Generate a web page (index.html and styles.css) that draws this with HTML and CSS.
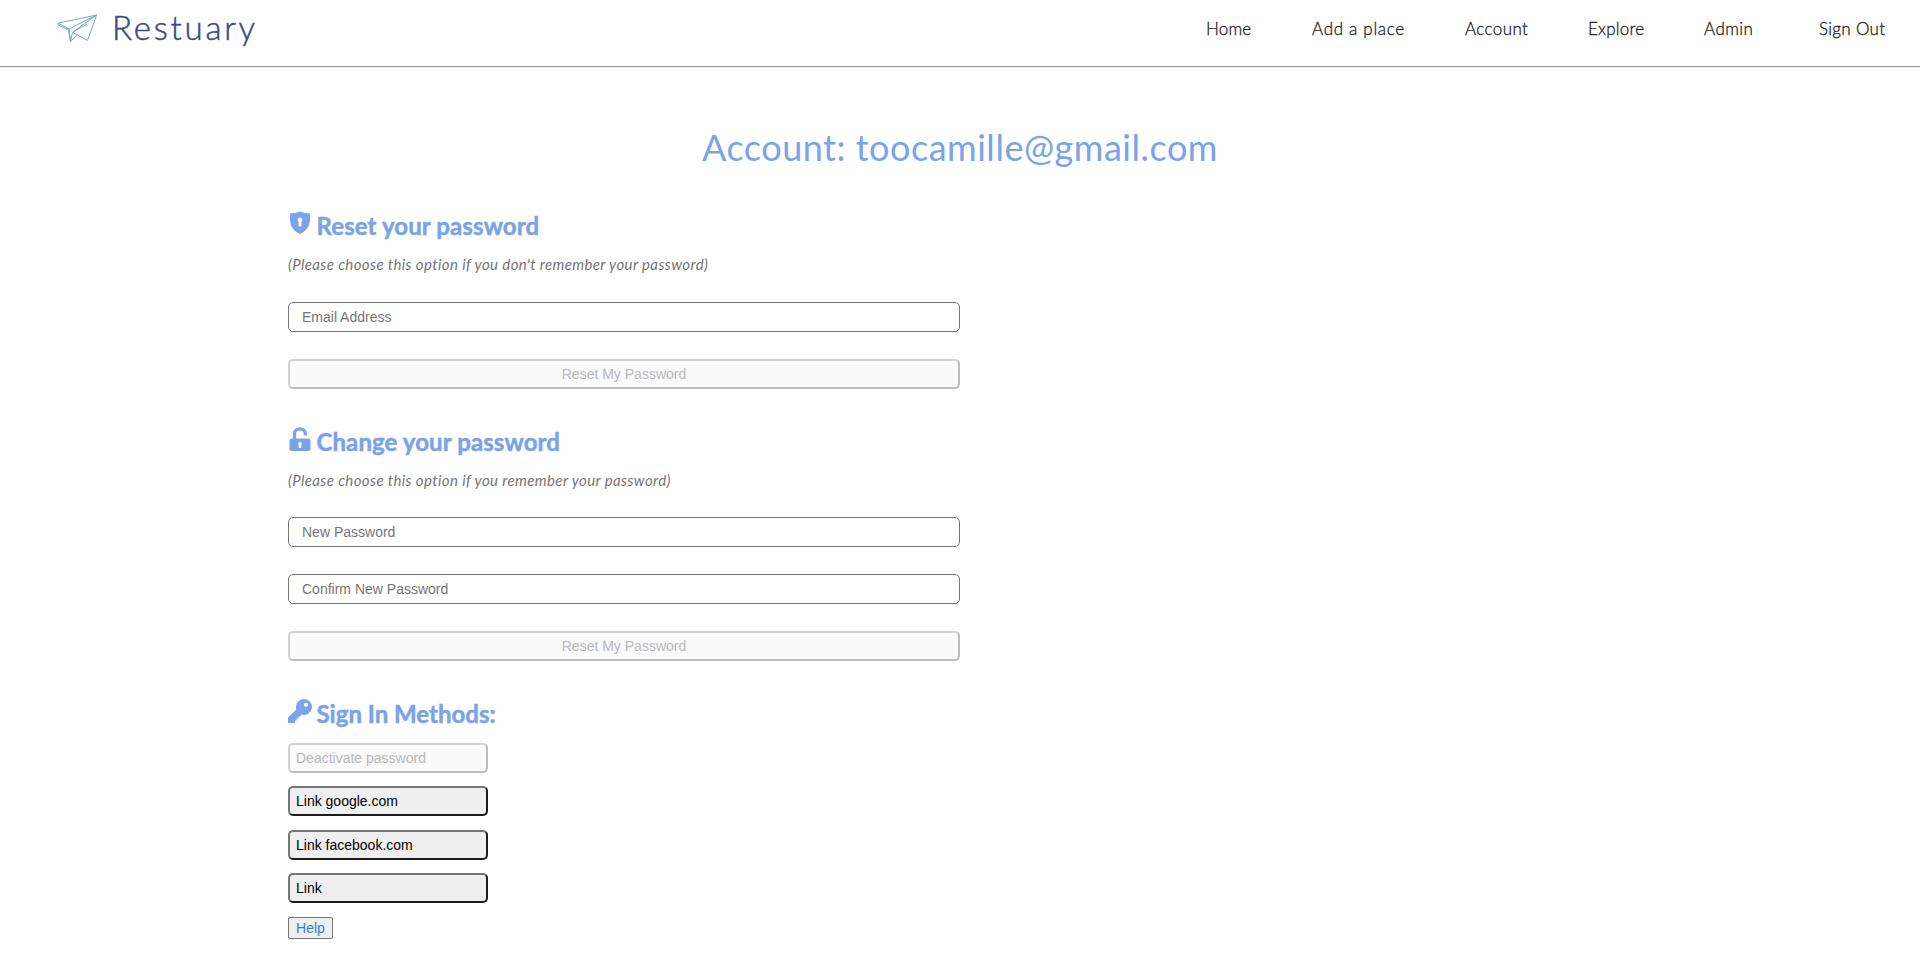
FILE: index.html
```
<!DOCTYPE html>
<html lang="en">
<head>
<meta charset="utf-8">
<title>Restuary</title>
<link rel="stylesheet" href="styles.css">
</head>
<body>
<header class="header">
  <a class="brand">
    <svg class="plane" width="42" height="30" viewBox="0 0 42 30" fill="none" stroke="#74a9c8" stroke-width="1" stroke-linejoin="round"><path d="M1 9.200 39.500 1 12 15Z"/><path d="M1 9.200 1.500 11 11.500 16 13.500 27.500 15.500 18.500 39.500 1 30.500 26.500 16 18.500"/><path d="M13.500 27.500 20.500 21"/><path d="M12 15 13.500 27.500M15.500 18.500 30 10"/></svg>
    <span class="wordmark">Restuary</span>
  </a>
  <nav class="nav">
    <a class="home">Home</a><a class="add">Add a place</a><a class="account">Account</a><a class="explore">Explore</a><a class="admin">Admin</a><a class="signout">Sign Out</a>
  </nav>
</header>
<main class="main">
  <h1 class="title">Account: toocamille@gmail.com</h1>
  <section class="section">
    <h2 class="heading heading-reset"><svg class="icon" width="24" height="24" viewBox="0 0 24 24"><path fill="#7aa3e8" fill-rule="evenodd" d="M12 0.500C9 1.800 5.500 2.500 2 2.500V9C2 15.500 6.500 20.500 12 23 17.500 20.500 22 15.500 22 9V2.500C18.500 2.500 15 1.800 12 0.500ZM12 6.500A2.300 2.300 0 0 0 10.700 10.700V15.500H13.300V10.700A2.300 2.300 0 0 0 12 6.500Z"/></svg><span>Reset your password</span></h2>
    <p class="note">(Please choose this option if you don't remember your password)</p>
    <input class="field" type="text" placeholder="Email Address">
    <button class="button" disabled>Reset My Password</button>
  </section>
  <section class="section">
    <h2 class="heading heading-change"><svg class="icon" width="24" height="24" viewBox="0 0 24 24"><path fill="none" stroke="#7aa3e8" stroke-width="3.300" d="M6.500 13V6.500C6.500 .300 17.300 .300 17.300 6.500V8.500"/><path fill="#7aa3e8" fill-rule="evenodd" d="M3.500 11.500H20.500Q22.500 11.500 22.500 13.500V22Q22.500 24 20.500 24H3.500Q1.500 24 1.500 22V13.500Q1.500 11.500 3.500 11.500ZM12 15A1.700 1.700 0 0 0 10.800 18V21H13.200V18A1.700 1.700 0 0 0 12 15Z"/></svg><span>Change your password</span></h2>
    <p class="note note-change">(Please choose this option if you remember your password)</p>
    <input class="field" type="password" placeholder="New Password">
    <input class="field" type="password" placeholder="Confirm New Password">
    <button class="button" disabled>Reset My Password</button>
  </section>
  <section class="section">
    <h2 class="heading"><svg class="icon" width="24" height="24" viewBox="0 0 24 24"><path fill="#7aa3e8" fill-rule="evenodd" d="M16 0A8 8 0 1 1 13.500 15.600L12 17.500H10.500V19.500H8.500V21.500H7V24H0V18.500L8.400 10.500A8 8 0 0 1 16 0ZM18 3.800A2 2 0 1 0 18 7.800 2 2 0 0 0 18 3.800Z"/></svg><span>Sign In Methods:</span></h2>
    <div class="methods">
      <button class="method" disabled>Deactivate password</button>
      <button class="method">Link google.com</button>
      <button class="method">Link facebook.com</button>
      <button class="method">Link</button>
      <button class="help">Help</button>
    </div>
  </section>
</main>
</body>
</html>
```
FILE: styles.css
```
* { box-sizing: border-box; }
body { margin: 0; background: #fff; font-family: Lato, sans-serif; }
.header { display: flex; justify-content: space-between; height: 68px; padding: 0 30px 0 57px; border-bottom: 1px solid #eee; box-shadow: inset 0 -1px 0 #969696; }
.brand { display: flex; padding-top: 14px; gap: 13px; }
.wordmark { margin-top: -7px; font-weight: 300; font-size: 33px; line-height: 40px; letter-spacing: 2.75px; color: #3c4a86; -webkit-text-stroke: 0.5px #3c4a86; }
.nav { display: flex; padding-top: 18px; font-size: 17px; line-height: 22px; font-weight: 300; letter-spacing: .2px; color: #222; -webkit-text-stroke: 0.3px #222; }
.nav a { white-space: nowrap; }
.home { width: 106px; }
.add { width: 153px; letter-spacing: .7px; }
.account { width: 123px; letter-spacing: .4px; }
.explore { width: 116px; letter-spacing: .2px; }
.admin { width: 115px; letter-spacing: .45px; }
.signout { width: 71px; letter-spacing: .3px; }
.main { width: 1344px; margin: 0 auto; }
.title { margin: 57px 0 0; text-align: center; font-weight: 400; font-size: 36px; line-height: 44px; letter-spacing: .52px; color: #7aa3e8; }
.section { display: flex; flex-direction: column; align-items: flex-start; }
.heading { display: flex; align-items: flex-start; gap: 4.5px; height: 32px; margin: 42px 0 0; font-size: 24px; line-height: 30px; font-weight: 700; color: #7aa3e8; -webkit-text-stroke: 0.5px #7aa3e8; }
.heading-reset, .heading-change { letter-spacing: .1px; }
.section + .section .heading { margin-top: 38px; }
.note { margin: 11px 0 28px; font-size: 15px; line-height: 20px; letter-spacing: .38px; font-style: italic; color: #757575; }
.note-change { margin-bottom: 27px; }
.field, .button { width: 672px; height: 30px; margin: 0 0 27px; border-radius: 5px; font-family: "Liberation Sans", Arial, sans-serif; font-size: 14px; }
.field { padding: 0 14px 0 13px; border: 1px solid #767676; }
.field::placeholder { color: #757575; }
.button { margin-bottom: 0; }
.methods { display: flex; flex-direction: column; align-items: flex-start; gap: 13.4px; margin-top: 12px; }
.method { width: 200px; height: 30px; padding: 0 6px; border-radius: 5px; text-align: left; font-family: "Liberation Sans", Arial, sans-serif; font-size: 14px; }
.help { width: 45px; height: 22px; padding: 0; border: 1px solid #767676; border-radius: 2px; background: #efefef; font-family: "Liberation Sans", Arial, sans-serif; font-size: 14px; line-height: 20px; color: #3b7cc9; }
.button, .method { border: 2px solid; border-color: #767676 #1c1c1c #1c1c1c #767676; background: #efefef; color: #000; }
.button:disabled, .method:disabled { border-color: #d1d1d1 #bcbcbc #bcbcbc #d1d1d1; background: #fafafa; color: #b8b8b8; }
```
